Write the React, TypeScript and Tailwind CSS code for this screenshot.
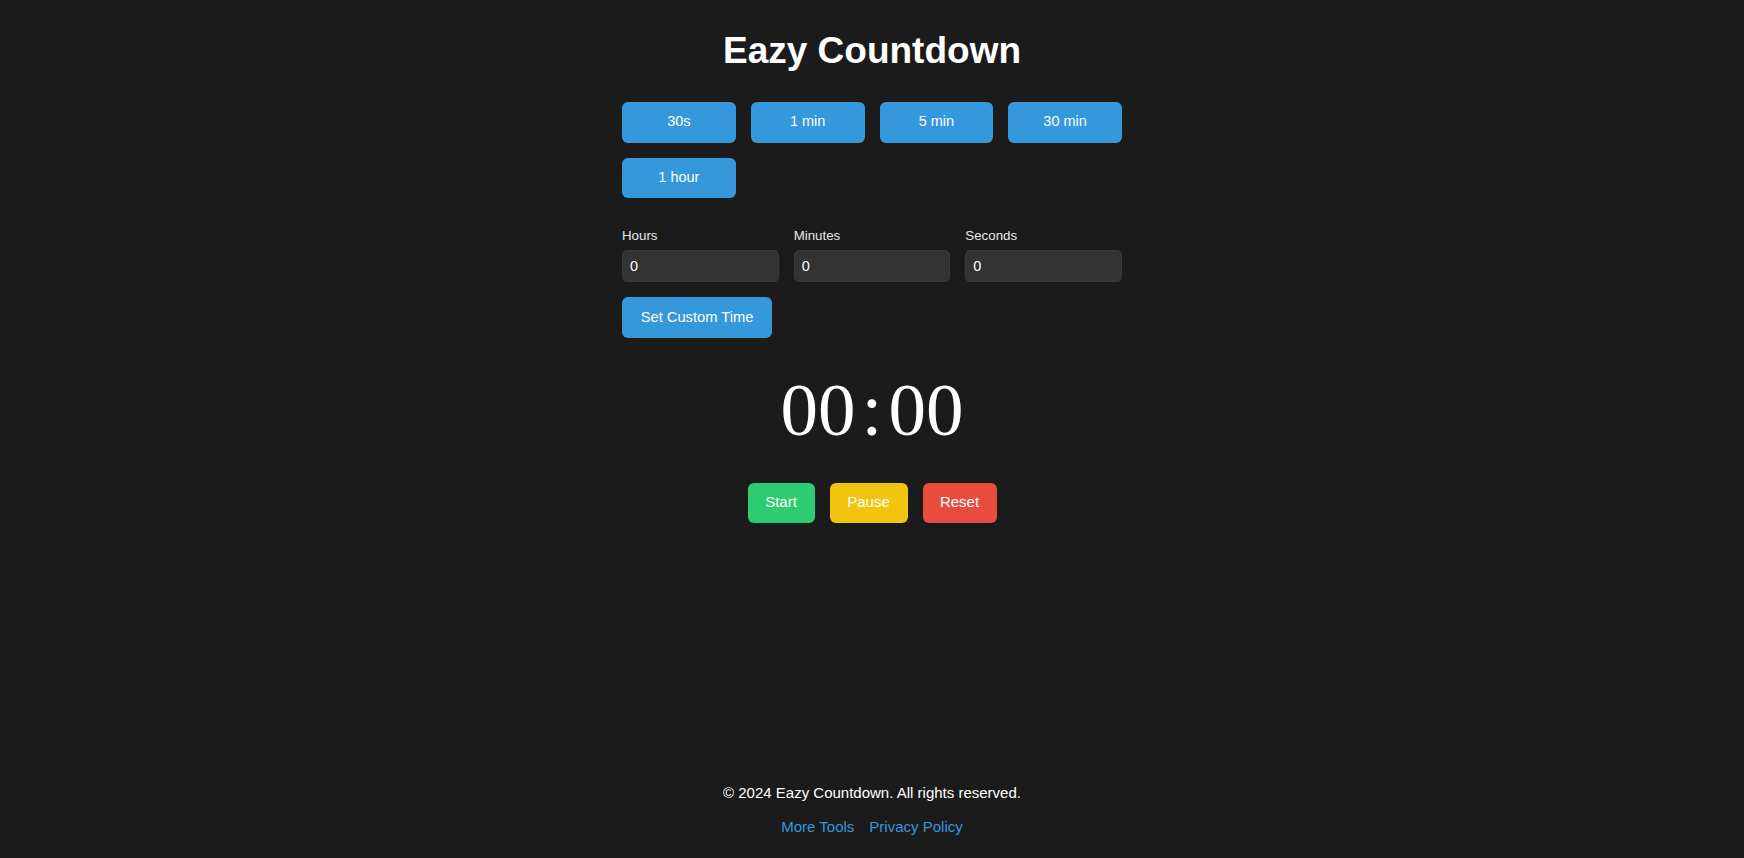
import { useState } from "react";

const presets = [
  { label: "30s", secs: 30 },
  { label: "1 min", secs: 60 },
  { label: "5 min", secs: 300 },
  { label: "30 min", secs: 1800 },
  { label: "1 hour", secs: 3600 },
];

function pad(n: number) {
  return n.toString().padStart(2, "0");
}

export default function App() {
  const [total, setTotal] = useState(0);
  const [h, setH] = useState("0");
  const [m, setM] = useState("0");
  const [s, setS] = useState("0");

  const mins = Math.floor(total / 60);
  const secs = total % 60;

  return (
    <div className="min-h-screen flex flex-col bg-[#1b1b1b] text-white font-['Liberation_Sans',Arial,sans-serif]">
      <main className="flex flex-col items-center">
        <div className="w-[500px] flex flex-col">
          <h1 className="mt-[30px] text-center text-[37px] leading-[42px] font-bold">Eazy Countdown</h1>

          {/* Quick presets */}
          <div className="mt-[30px] grid grid-cols-4 gap-[15px]">
            {presets.map((p) => (
              <button
                key={p.label}
                onClick={() => setTotal(p.secs)}
                className="h-[40.5px] rounded-[6px] bg-[#3498db] text-[14.5px] text-white"
              >
                {p.label}
              </button>
            ))}
          </div>

          {/* Custom time */}
          <div className="mt-[30px] grid grid-cols-3 gap-x-[15px]">
            {[
              { label: "Hours", value: h, set: setH },
              { label: "Minutes", value: m, set: setM },
              { label: "Seconds", value: s, set: setS },
            ].map((f) => (
              <label key={f.label} className="flex flex-col">
                <span className="text-[13.3px] leading-[15px] text-[#e8e8e8]">{f.label}</span>
                <input
                  type="number"
                  value={f.value}
                  onChange={(e) => f.set(e.target.value)}
                  className="mt-[7px] h-[31.5px] rounded-[5px] border border-[#3a3a3a] bg-[#333333] px-[7px] text-[14.5px] text-white outline-none [appearance:textfield]"
                />
              </label>
            ))}
          </div>

          <div className="mt-[15px]">
            <button
              onClick={() => setTotal((+h || 0) * 3600 + (+m || 0) * 60 + (+s || 0))}
              className="h-[41px] w-[150px] rounded-[6px] bg-[#3498db] text-[14.7px] text-white"
            >
              Set Custom Time
            </button>
          </div>
        </div>

        {/* Display */}
        <div className="mt-[29.5px] flex items-center text-[75px] leading-[86px] font-['Liberation_Serif','Times_New_Roman',serif]">
          <span>{pad(mins)}</span>
          <span className="mx-[6px]">:</span>
          <span>{pad(secs)}</span>
        </div>

        <div className="mt-[29.5px] flex gap-[15px]">
          <button className="h-[40px] w-[67px] rounded-[6px] bg-[#2ecc71] text-[15px] text-white">Start</button>
          <button className="h-[40px] w-[78px] rounded-[6px] bg-[#f1c40f] text-[15px] text-white">Pause</button>
          <button className="h-[40px] w-[74px] rounded-[6px] bg-[#e74c3c] text-[15px] text-white">Reset</button>
        </div>
      </main>

      <footer className="mt-auto flex flex-col items-center pb-[23px] text-[15px] leading-[17px]">
        <p>© 2024 Eazy Countdown. All rights reserved.</p>
        <div className="mt-[17px] flex gap-[15px] text-[#3498db]">
          <a href="#">More Tools</a>
          <a href="#">Privacy Policy</a>
        </div>
      </footer>
    </div>
  );
}
